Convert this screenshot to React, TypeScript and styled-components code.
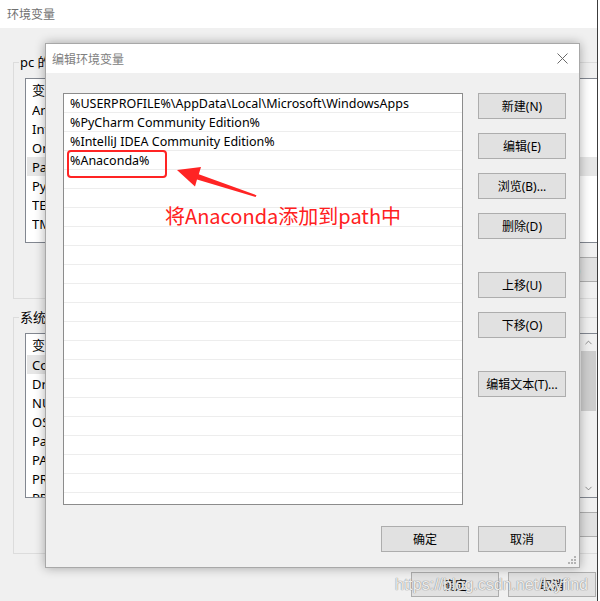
import React from "react";
import styled, { createGlobalStyle } from "styled-components";
import { ChevronUp, ChevronDown } from "lucide-react";

const UI_FONT = `"Noto Sans", "Noto Sans CJK SC", sans-serif`;

const GlobalStyle = createGlobalStyle`
  html, body { margin: 0; padding: 0; background: #fff; }
  body { font-family: ${UI_FONT}; }
  * { box-sizing: border-box; }
`;

const Screen = styled.div`
  position: relative;
  width: 600px;
  height: 601px;
  overflow: hidden;
  display: flex;
  background: #fff;
  font-family: ${UI_FONT};
`;

const BgWindow = styled.div`
  width: 597px;
  flex: none;
  overflow: hidden;
  background: #f0f0f0;
  display: flex;
  flex-direction: column;
`;

const WindowEdge = styled.div`
  width: 1px;
  flex: none;
  background: #3c3c3c;
`;

const TitleBar = styled.div`
  height: 28px;
  flex: none;
  background: #fff;
  display: flex;
  align-items: center;
  padding-left: 7px;
  font-size: 12px;
  color: #707070;
`;

const BgBody = styled.div`
  padding-left: 13px;
  display: flex;
  flex-direction: column;
`;

const Group = styled.section<{ $top: number }>`
  width: 640px;
  margin-top: ${(p) => p.$top}px;
  border: 1px solid #dcdcdc;
  padding: 0 0 16px 11px;
`;

const Legend = styled.div`
  width: fit-content;
  margin: -10px 0 0 -6px;
  padding: 0 1px;
  height: 18px;
  line-height: 18px;
  font-size: 13px;
  color: #000;
  background: #f0f0f0;
`;

const BgList = styled.div`
  margin-top: 7px;
  width: 573px;
  height: 165px;
  border: 1px solid #828790;
  background: #fff;
  display: flex;
  overflow: hidden;
`;

const BgRows = styled.div`
  flex: 1;
  display: flex;
  flex-direction: column;
`;

const BgRow = styled.div<{ $head?: boolean; $selected?: boolean }>`
  height: ${(p) => (p.$head ? 21 : 19)}px;
  flex: none;
  display: flex;
  align-items: center;
  padding-left: 5px;
  font-size: 13px;
  color: #000;
  white-space: nowrap;
  background: ${(p) => (p.$selected ? "#e6e6e6" : "transparent")};
  margin-left: 1px;
`;

const Cell = styled.span<{ $w: number }>`
  width: ${(p) => p.$w}px;
  flex: none;
  overflow: hidden;
`;

const ScrollBar = styled.div`
  width: 17px;
  flex: none;
  background: #f0f0f0;
  display: flex;
  flex-direction: column;
  align-items: center;
  color: #606060;
`;

const ScrollArrow = styled.div`
  height: 17px;
  flex: none;
  display: flex;
  align-items: center;
  justify-content: center;
`;

const ScrollThumb = styled.div`
  width: 15px;
  height: 60px;
  background: #cdcdcd;
`;

const ScrollTrack = styled.div`
  flex: 1;
`;

const BgButtonRow = styled.div`
  margin-top: 14px;
  display: flex;
  justify-content: flex-end;
  gap: 9px;
  padding-right: 42px;
`;

const BgButton = styled.div<{ $w?: number }>`
  width: ${(p) => p.$w ?? 88}px;
  height: 25px;
  border: 1px solid #adadad;
  background: #e1e1e1;
  font-size: 12px;
  display: flex;
  align-items: center;
  justify-content: center;
  color: #000;
`;

const BgFooter = styled.div`
  margin-top: 18px;
  display: flex;
  justify-content: flex-end;
  gap: 9px;
  padding-right: 1px;
`;

/* ---------- dialog ---------- */

const Dialog = styled.div`
  position: absolute;
  left: 45px;
  top: 43px;
  width: 535px;
  height: 525px;
  border: 1px solid #a8a8a8;
  background: #f0f0f0;
  box-shadow: 0 0 10px rgba(0, 0, 0, 0.32);
  display: flex;
  flex-direction: column;
`;

const DialogTitle = styled.div`
  height: 29px;
  flex: none;
  background: #fff;
  display: flex;
  align-items: center;
  justify-content: space-between;
  padding: 0 11px 0 6px;
  font-size: 12px;
  color: #808080;
`;

const DialogBody = styled.div`
  flex: 1;
  display: flex;
  flex-direction: column;
  padding: 20px 13px 15px 17px;
`;

const ContentRow = styled.div`
  display: flex;
  gap: 15px;
`;

const PathList = styled.div`
  width: 400px;
  height: 412px;
  border: 1px solid #8c8c8c;
  background: #fff;
  overflow: hidden;
  display: flex;
  flex-direction: column;
`;

const PathRow = styled.div`
  height: 19px;
  flex: none;
  border-bottom: 1px solid #ededed;
  padding: 1px 0 0 6px;
  font-size: 12.5px;
  line-height: 18px;
  color: #000;
  white-space: nowrap;
  overflow: hidden;
`;

const ButtonColumn = styled.div`
  width: 88px;
  display: flex;
  flex-direction: column;
`;

const Button = styled.div<{ $gap?: number }>`
  height: 26px;
  margin-top: ${(p) => p.$gap ?? 0}px;
  border: 1px solid #adadad;
  background: #e1e1e1;
  font-size: 12px;
  color: #000;
  display: flex;
  align-items: center;
  justify-content: center;
  white-space: nowrap;
`;

const Footer = styled.div`
  margin-top: 21px;
  display: flex;
  justify-content: flex-end;
  gap: 9px;
`;

const FooterButton = styled(Button)`
  width: 88px;
`;

const Grip = styled.svg`
  position: absolute;
  right: 3px;
  bottom: 3px;
`;

/* ---------- annotations ---------- */

const RedBox = styled.div`
  position: absolute;
  left: 67px;
  top: 150px;
  width: 100px;
  height: 28px;
  border: 2px solid #ff2424;
  border-radius: 4px;
`;

const Note = styled.div`
  position: absolute;
  left: 165px;
  top: 202px;
  font-family: "Noto Sans CJK SC", sans-serif;
  font-size: 20px;
  line-height: 28px;
  color: #ff2020;
  white-space: nowrap;
`;

const ArrowLayer = styled.svg`
  position: absolute;
  left: 0;
  top: 0;
  pointer-events: none;
`;

const Watermark = styled.div`
  position: absolute;
  left: 395px;
  top: 575px;
  font-family: "Liberation Sans", Arial, sans-serif;
  font-size: 16px;
  line-height: 20px;
  color: rgba(255, 255, 255, 0.85);
  text-shadow: 0 0 1px #8a8a8a, 0 0 1px #8a8a8a;
  white-space: nowrap;
  pointer-events: none;
`;

const userVars: [string, string][] = [
  ["Anaconda", "D:\\Anaconda3"],
  ["IntelliJ IDEA Community Edition", "D:\\IntelliJ IDEA\\bin;"],
  ["OneDrive", "C:\\Users\\pc\\OneDrive"],
  ["Path", "%USERPROFILE%\\AppData\\Local\\Microsoft\\WindowsApps;"],
  ["PyCharm Community Edition", "D:\\PyCharm\\bin;"],
  ["TEMP", "%USERPROFILE%\\AppData\\Local\\Temp"],
  ["TMP", "%USERPROFILE%\\AppData\\Local\\Temp"],
];

const sysVars: [string, string][] = [
  ["ComSpec", "C:\\WINDOWS\\system32\\cmd.exe"],
  ["DriverData", "C:\\Windows\\System32\\Drivers\\DriverData"],
  ["NUMBER_OF_PROCESSORS", "8"],
  ["OS", "Windows_NT"],
  ["Path", "C:\\WINDOWS\\system32;C:\\WINDOWS"],
  ["PATHEXT", ".COM;.EXE;.BAT;.CMD;.VBS"],
  ["PROCESSOR_ARCHITECTURE", "AMD64"],
  ["PROCESSOR_IDENTIFIER", "Intel64 Family 6 Model 142"],
];

const paths = [
  "%USERPROFILE%\\AppData\\Local\\Microsoft\\WindowsApps",
  "%PyCharm Community Edition%",
  "%IntelliJ IDEA Community Edition%",
  "%Anaconda%",
];

const ROWS = 22;

export default function App() {
  const pathRows = Array.from({ length: ROWS }, (_, i) => paths[i] ?? "");
  return (
    <Screen>
      <GlobalStyle />
      <BgWindow>
        <TitleBar>环境变量</TitleBar>
        <BgBody>
          <Group $top={34}>
            <Legend>pc 的用户变量(U)</Legend>
            <BgList>
              <BgRows>
                <BgRow $head>
                  <Cell $w={180}>变量</Cell>
                  <Cell $w={300}>值</Cell>
                </BgRow>
                {userVars.map(([k, v]) => (
                  <BgRow key={k} $selected={k === "Path"}>
                    <Cell $w={180}>{k}</Cell>
                    <Cell $w={300}>{v}</Cell>
                  </BgRow>
                ))}
              </BgRows>
            </BgList>
            <BgButtonRow>
              <BgButton>新建(N)...</BgButton>
              <BgButton>编辑(E)...</BgButton>
              <BgButton $w={100}>删除(D)</BgButton>
            </BgButtonRow>
          </Group>
          <Group $top={18}>
            <Legend>系统变量(S)</Legend>
            <BgList>
              <BgRows>
                <BgRow $head>
                  <Cell $w={180}>变量</Cell>
                  <Cell $w={300}>值</Cell>
                </BgRow>
                {sysVars.map(([k, v]) => (
                  <BgRow key={k} $selected={k === "ComSpec"}>
                    <Cell $w={180}>{k}</Cell>
                    <Cell $w={300}>{v}</Cell>
                  </BgRow>
                ))}
              </BgRows>
              <ScrollBar>
                <ScrollArrow>
                  <ChevronUp size={11} strokeWidth={1.5} />
                </ScrollArrow>
                <ScrollThumb />
                <ScrollTrack />
                <ScrollArrow>
                  <ChevronDown size={11} strokeWidth={1.5} />
                </ScrollArrow>
              </ScrollBar>
            </BgList>
            <BgButtonRow>
              <BgButton>新建(W)...</BgButton>
              <BgButton>编辑(I)...</BgButton>
              <BgButton $w={100}>删除(L)</BgButton>
            </BgButtonRow>
          </Group>
          <BgFooter>
            <BgButton>确定</BgButton>
            <BgButton>取消</BgButton>
          </BgFooter>
        </BgBody>
      </BgWindow>
      <WindowEdge />

      <Dialog>
        <DialogTitle>
          <span>编辑环境变量</span>
          <svg width="11" height="11" viewBox="0 0 11 11">
            <path d="M0.5 0.5 L10.5 10.5 M10.5 0.5 L0.5 10.5" stroke="#6a6a6a" strokeWidth="1" fill="none" />
          </svg>
        </DialogTitle>
        <DialogBody>
          <ContentRow>
            <PathList>
              {pathRows.map((p, i) => (
                <PathRow key={i}>{p}</PathRow>
              ))}
            </PathList>
            <ButtonColumn>
              <Button>新建(N)</Button>
              <Button $gap={14}>编辑(E)</Button>
              <Button $gap={14}>浏览(B)...</Button>
              <Button $gap={14}>删除(D)</Button>
              <Button $gap={33}>上移(U)</Button>
              <Button $gap={14}>下移(O)</Button>
              <Button $gap={33}>编辑文本(T)...</Button>
            </ButtonColumn>
          </ContentRow>
          <Footer>
            <FooterButton>确定</FooterButton>
            <FooterButton>取消</FooterButton>
          </Footer>
        </DialogBody>
        <Grip width="9" height="9" viewBox="0 0 9 9">
          {[
            [7, 1],
            [7, 4],
            [4, 4],
            [7, 7],
            [4, 7],
            [1, 7],
          ].map(([x, y], i) => (
            <rect key={i} x={x} y={y} width="2" height="2" fill="#b4b4b4" />
          ))}
        </Grip>
      </Dialog>

      <RedBox />
      <ArrowLayer width="600" height="601" viewBox="0 0 600 601">
        <polygon
          points="177,170 201,167 198.8,174.3 256.5,195.3 255.6,197 197,179.5 195,186.5"
          fill="#ff2424"
        />
      </ArrowLayer>
      <Note>将Anaconda添加到path中</Note>
      <Watermark>https://blog.csdn.net/lxyfind</Watermark>
    </Screen>
  );
}
